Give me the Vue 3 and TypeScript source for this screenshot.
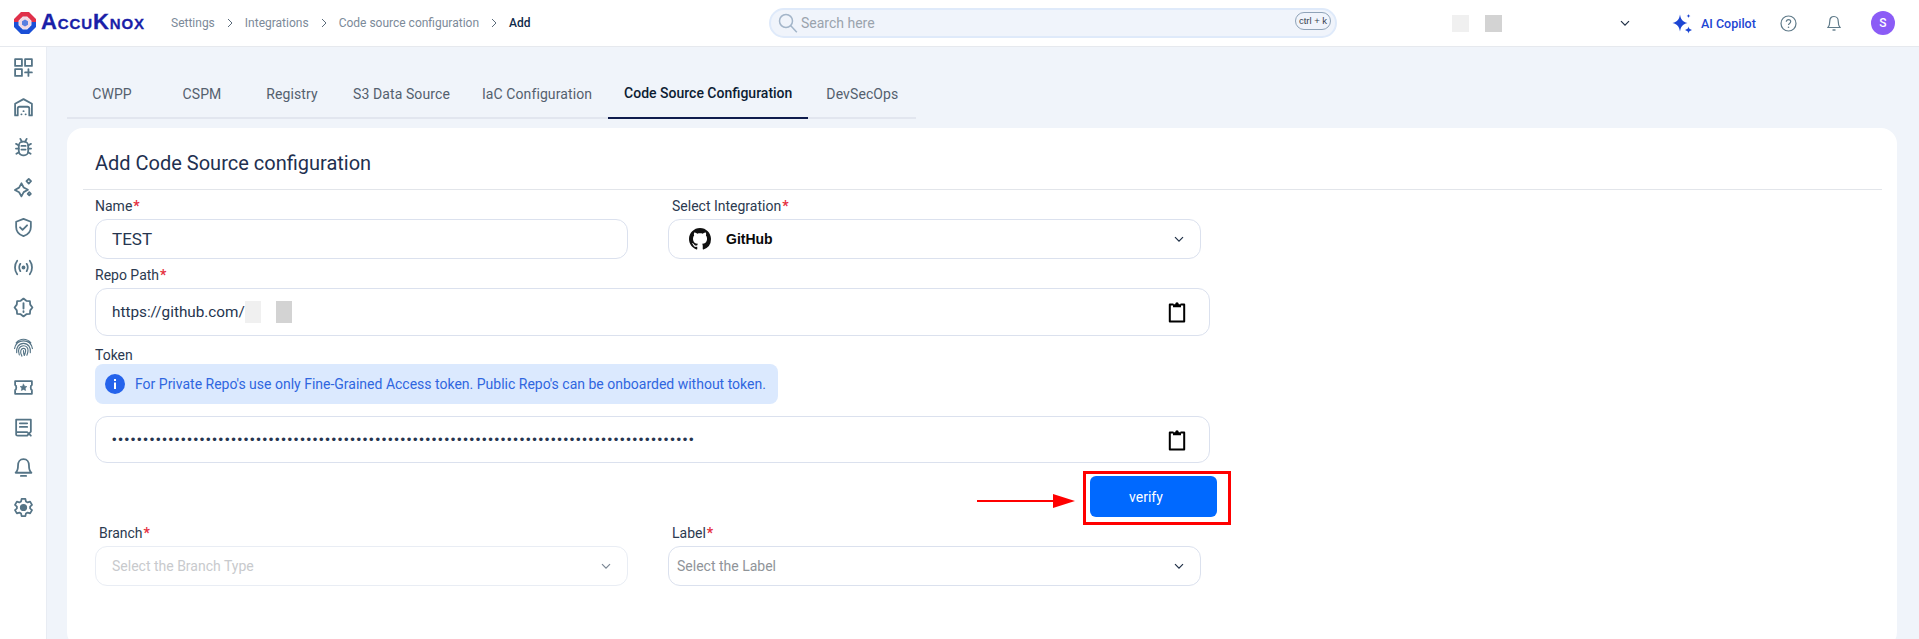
<script setup lang="ts">
const crumbs = ['Settings', 'Integrations', 'Code source configuration']
const tabs = ['CWPP', 'CSPM', 'Registry', 'S3 Data Source', 'IaC Configuration', 'Code Source Configuration', 'DevSecOps']
const activeTab = 'Code Source Configuration'
const tokenDots = '•'.repeat(93)
</script>

<template>
  <div class="shell">
    <header class="topbar">
      <div class="logo">
        <svg width="24" height="24" viewBox="0 0 24 24">
          <path d="M8 1.500h8l6.500 6.500v8L16 22.500H8L1.500 16V8z" fill="#e8edf9" />
          <path d="M8 1h8l7 7v3h-4.500V9.800L14.200 5.500H9.800L5.500 9.800V11H1V8z" fill="#e0304a" />
          <path d="M1 11h4.500v3.200l4.300 4.300h4.400l4.300-4.300V11H23v5l-7 7H8l-7-7z" fill="#1a4fd6" />
          <circle cx="12" cy="12" r="6" fill="#f4d9e4" />
          <path d="M12 8.500l3 1.700v3.500l-3 1.800-3-1.800v-3.500z" fill="#5b7fe0" />
        </svg>
        <span class="logo-text">AccuKnox</span>
      </div>
      <nav class="crumbs">
        <template v-for="c in crumbs" :key="c">
          <span class="crumb">{{ c }}</span>
          <svg class="crumb-sep" width="8" height="10" viewBox="0 0 8 10"><path d="M2 1l4 4-4 4" fill="none" stroke="#5b6b7b" stroke-width="1" /></svg>
        </template>
        <span class="crumb-current">Add</span>
      </nav>
      <div class="search">
        <svg width="22" height="22" viewBox="0 0 22 22"><circle cx="9" cy="9" r="6.500" fill="none" stroke="#a3b5c9" stroke-width="1.500" /><path d="M13.800 13.800l6 6.500" stroke="#a3b5c9" stroke-width="1.500" /></svg>
        <span class="search-hint">Search here</span>
        <span class="kbd">ctrl + k</span>
      </div>
      <div class="top-right">
        <span class="mask shade-light"></span>
        <span class="mask shade-dark"></span>
        <svg class="org-chev" width="10" height="7" viewBox="0 0 10 7"><path d="M1 1.200l4 4 4-4" fill="none" stroke="#1f2f46" stroke-width="1.200" /></svg>
        <svg class="spark" width="21" height="21" viewBox="0 0 21 21" fill="#1d46d3">
          <path d="M8 1.500c.9 5 2.300 7 7.500 8.500-5.200 1.500-6.600 3.500-7.500 8.500C7.100 13.500 5.700 11.500.5 10 5.700 8.500 7.100 6.500 8 1.500z" />
          <path d="M16.500 1c.3 1.300.7 1.700 2 2-1.300.3-1.700.7-2 2-.3-1.300-.7-1.700-2-2 1.300-.3 1.700-.7 2-2z" />
          <path d="M16.500 13.500c.4 2 1 2.600 3.500 3.500-2.500.9-3.100 1.500-3.500 3.500-.4-2-1-2.600-3.500-3.500 2.500-.9 3.100-1.500 3.500-3.500z" />
        </svg>
        <span class="copilot">AI Copilot</span>
        <svg class="help" width="17" height="17" viewBox="0 0 17 17"><circle cx="8.500" cy="8.500" r="7.500" fill="none" stroke="#5f7a89" stroke-width="1.200" /><path d="M6.300 6.700c0-1.300 1-2.100 2.200-2.100s2.200.8 2.200 2c0 1.900-2.200 1.700-2.200 3.500" fill="none" stroke="#5f7a89" stroke-width="1.200" /><circle cx="8.500" cy="12.300" r=".8" fill="#5f7a89" /></svg>
        <svg class="bell" width="14" height="17" viewBox="0 0 14 17"><path d="M7 1.500c-2.700 0-4.200 2-4.200 4.500 0 3.500-.5 5-1.800 6.500h12c-1.300-1.500-1.800-3-1.800-6.500 0-2.500-1.500-4.500-4.200-4.500z" fill="none" stroke="#5f7a89" stroke-width="1.200" /><path d="M5.500 15h3" stroke="#5f7a89" stroke-width="1.400" /></svg>
        <span class="avatar">S</span>
      </div>
    </header>

    <div class="body">
      <aside class="sidebar">
        <!-- dashboard -->
        <svg viewBox="0 0 20 20"><rect x="2" y="2" width="6.500" height="6.500" /><rect x="11.500" y="2" width="6.500" height="6.500" /><rect x="2" y="11.500" width="6.500" height="6.500" /><path d="M14.700 11.500v6.500M11.500 14.700H18" /></svg>
        <!-- warehouse -->
        <svg viewBox="0 0 20 20"><path d="M2 17.500V6.500L10 2l8 4.500v11h-2.500V11c0-1-.7-1.700-1.700-1.700H6.200c-1 0-1.700.7-1.700 1.700v6.500z" /><path d="M8 16.500h.1M12 16.500h.1M10 13.500h.1" stroke-width="1.800" /></svg>
        <!-- bug -->
        <svg viewBox="0 0 20 20"><rect x="5.500" y="4.500" width="9" height="13" rx="4" /><path d="M8 8.500h4M8 12h4M7 1.800l1.500 2.700M13 1.800l-1.500 2.700M2.800 6.500l2.700 1.500M17.200 6.500L14.500 8M2.800 11h2.700M17.200 11h-2.700M3.200 16l2.500-1.500M16.800 16l-2.500-1.500" /></svg>
        <!-- sparkles -->
        <svg viewBox="0 0 20 20"><path d="M8 6l2.200 4 4 2.200-4 2.200L8 18.500l-2.200-4-4-2.200 4-2.200z" /><path d="M15 1.800l2.200 2.200-2.200 2.200L12.800 4z" /><path d="M15.500 14.500l1.500 1.500-1.500 1.500-1.500-1.500z" /></svg>
        <!-- shield -->
        <svg viewBox="0 0 20 20"><path d="M10 1.800l7 2.700v5c0 4.300-2.800 7.300-7 8.700-4.200-1.400-7-4.400-7-8.700v-5z" /><path d="M6.700 9.800l2.400 2.400 4.300-4.300" /></svg>
        <!-- signal -->
        <svg viewBox="0 0 20 20"><path d="M4 3.500C1.200 7.200 1.200 12.800 4 16.500M16 3.500c2.800 3.700 2.800 9.300 0 13M7 6.500c-1.400 2.200-1.400 4.800 0 7M13 6.500c1.400 2.200 1.400 4.800 0 7" /><circle cx="10" cy="10" r="1" fill="#557486" /></svg>
        <!-- alert badge -->
        <svg viewBox="0 0 20 20"><path d="M10 1.500l2.700 2.100 3.400.3.300 3.400L18.500 10l-2.100 2.700-.3 3.400-3.400.3-2.700 2.100-2.700-2.100-3.400-.3-.3-3.400L1.500 10l2.100-2.700.3-3.400 3.400-.3z" /><path d="M10 5.800v5.200M10 13.500v.8" stroke-width="1.800" /></svg>
        <!-- fingerprint -->
        <svg viewBox="0 0 20 20"><path d="M3 5.500C6.800 1 13.200 1 17 5.500M1.500 11C2.500 6.200 6 3.700 10 3.700s7.500 2.500 8.500 7.300M3.500 15c-.8-5 2-9 6.500-9s7.300 4 6.500 9M6 17c-1-2.500-1-4.500-.3-6 1-2 2.500-2.700 4.300-2.700 2.700 0 4.500 2 4.300 4.700-.1 1.700-.5 3-1.100 4.300M8.500 18.200c-1.200-2-1.500-4-1-5.500.4-1.100 1.300-1.900 2.500-1.900 1.500 0 2.300 1.200 2 2.800-.2 1.500-.6 2.700-1.300 4M10 13c0 2 .2 3.200.8 4.500" stroke-width="1.100" /></svg>
        <!-- ticket -->
        <svg viewBox="0 0 20 20"><path d="M2 4h16v3.500c-1.500.6-1.500 4.400 0 5V16H2v-3.500c1.500-.6 1.500-4.400 0-5z" /><path d="M10 6.800l1 2 2.200.3-1.600 1.500.4 2.200-2-1-2 1 .4-2.200-1.600-1.500L9 8.800z" fill="#557486" stroke-width=".6" /></svg>
        <!-- report -->
        <svg viewBox="0 0 20 20"><path d="M3 17V2.500h14v11.500l-3.500 3.800H4.500C3.500 17.800 3 17.500 3 17zM3 14.500h10.500l3.500 3.300" /><path d="M6.500 6h7M6.500 9.500h7" /></svg>
        <!-- bell -->
        <svg viewBox="0 0 20 20"><path d="M10 2C6.500 2 4.800 4.800 4.800 8c0 3.800-.7 5.500-2.300 7h15c-1.600-1.500-2.300-3.200-2.300-7 0-3.200-1.700-6-5.200-6z" /><path d="M7.500 18h5" /></svg>
        <!-- settings -->
        <svg viewBox="0 0 20 20"><path d="M8.200 1.800h3.600l.5 2.400 1.700 1 2.300-.8 1.800 3.100-1.800 1.600v1.800l1.800 1.600-1.800 3.100-2.300-.8-1.700 1-.5 2.400H8.200l-.5-2.400-1.700-1-2.300.8-1.800-3.100 1.800-1.600V9.100L1.900 7.500l1.800-3.100 2.300.8 1.700-1z" /><circle cx="10" cy="10" r="2.600" fill="#557486" /></svg>
      </aside>

      <main class="main">
        <div class="tabs">
          <div v-for="t in tabs" :key="t" class="tab" :class="{ active: t === activeTab }">{{ t }}</div>
        </div>

        <section class="card">
          <h1 class="card-title">Add Code Source configuration</h1>
          <div class="form">
            <div class="row">
              <div class="field">
                <label class="lbl">Name<b>*</b></label>
                <div class="box name-box">TEST</div>
              </div>
              <div class="field">
                <label class="lbl shift">Select Integration<b>*</b></label>
                <div class="box select">
                  <svg class="gh" width="22" height="22" viewBox="0 0 16 16"><path fill="#111" d="M8 0C3.580 0 0 3.580 0 8c0 3.540 2.290 6.530 5.470 7.590.4.070.55-.17.550-.38 0-.19-.01-.82-.01-1.490-2.010.37-2.530-.49-2.690-.94-.09-.23-.48-.94-.82-1.130-.28-.15-.68-.52-.01-.53.630-.01 1.080.58 1.230.82.720 1.210 1.870.87 2.330.66.070-.52.280-.87.510-1.070-1.780-.2-3.640-.89-3.640-3.950 0-.87.310-1.590.820-2.150-.08-.2-.36-1.020.08-2.120 0 0 .67-.21 2.200.82.640-.18 1.320-.27 2-.27s1.360.09 2 .27c1.530-1.040 2.200-.82 2.200-.82.440 1.100.16 1.920.08 2.120.51.560.82 1.270.82 2.150 0 3.070-1.870 3.750-3.650 3.950.29.250.54.730.54 1.480 0 1.070-.01 1.930-.01 2.200 0 .21.150.46.550.38A8.010 8.010 0 0 0 16 8c0-4.420-3.580-8-8-8z" /></svg>
                  <span class="gh-name">GitHub</span>
                  <svg class="chev" width="10" height="7" viewBox="0 0 10 7"><path d="M1 1.200l4 4 4-4" fill="none" stroke="#1f2f46" stroke-width="1.200" /></svg>
                </div>
              </div>
            </div>

            <div class="field wide">
              <label class="lbl">Repo Path<b>*</b></label>
              <div class="box tall repo">
                <span>https://github.com/</span>
                <span class="mask-inline shade-light"></span>
                <span class="mask-inline shade-dark"></span>
                <svg class="clip" width="18" height="22" viewBox="0 0 18 22"><path d="M5.500 3.500H1.800v17h14.400v-17h-3.700" fill="none" stroke="#000" stroke-width="2" stroke-linejoin="round" /><path d="M5 6.200V3.300h2.200C7.400 2 8 1.200 9 1.200s1.600.8 1.800 2.100H13v2.900z" fill="#000" /></svg>
              </div>
            </div>

            <div class="field wide token-field">
              <label class="lbl">Token</label>
              <div class="notice">
                <svg width="20" height="20" viewBox="0 0 20 20"><circle cx="10" cy="10" r="10" fill="#2563eb" /><rect x="9" y="8.500" width="2" height="6.500" fill="#fff" /><rect x="9" y="5" width="2" height="2" fill="#fff" /></svg>
                <span>For Private Repo's use only Fine-Grained Access token. Public Repo's can be onboarded without token.</span>
              </div>
              <div class="box token">
                <span class="dots">{{ tokenDots }}</span>
                <svg class="clip" width="18" height="22" viewBox="0 0 18 22"><path d="M5.500 3.500H1.800v17h14.400v-17h-3.700" fill="none" stroke="#000" stroke-width="2" stroke-linejoin="round" /><path d="M5 6.200V3.300h2.200C7.400 2 8 1.200 9 1.200s1.600.8 1.800 2.100H13v2.900z" fill="#000" /></svg>
              </div>
            </div>

            <div class="verify-row">
              <button class="verify" type="button">verify</button>
              <!-- review markup drawn over the button -->
              <span class="mark-box"></span>
              <svg class="mark-arrow" width="98" height="14" viewBox="0 0 98 14"><path d="M0 7h78" stroke="#f00" stroke-width="2" /><path d="M76 0l22 7-22 7z" fill="#f00" /></svg>
            </div>

            <div class="row">
              <div class="field">
                <label class="lbl shift">Branch<b>*</b></label>
                <div class="box select disabled">
                  <span class="ph">Select the Branch Type</span>
                  <svg class="chev" width="10" height="7" viewBox="0 0 10 7"><path d="M1 1.200l4 4 4-4" fill="none" stroke="#7b8794" stroke-width="1.200" /></svg>
                </div>
              </div>
              <div class="field">
                <label class="lbl shift">Label<b>*</b></label>
                <div class="box select narrow-pad">
                  <span class="ph strong">Select the Label</span>
                  <svg class="chev" width="10" height="7" viewBox="0 0 10 7"><path d="M1 1.200l4 4 4-4" fill="none" stroke="#1f2f46" stroke-width="1.200" /></svg>
                </div>
              </div>
            </div>
          </div>
        </section>
      </main>
    </div>
  </div>
</template>

<style scoped>
.shell {
  width: 1919px;
  height: 639px;
  overflow: hidden;
  display: flex;
  flex-direction: column;
  font-family: Roboto, "Liberation Sans", sans-serif;
  color: #1f2f46;
  background: #f0f4fa;
}

/* top bar */
.topbar {
  height: 46px;
  flex: none;
  display: flex;
  align-items: center;
  background: #fff;
  border-bottom: 1px solid #e6e9ee;
  padding-left: 13px;
  box-sizing: content-box;
}
.logo {
  display: flex;
  align-items: center;
  gap: 4px;
  width: 158px;
  flex: none;
  margin-top: -1px;
}
.logo-text {
  font-family: "Liberation Sans", sans-serif;
  font-variant: small-caps;
  font-weight: 700;
  font-size: 22px;
  letter-spacing: 0.9px;
  -webkit-text-stroke: 0.3px #1a1fa8;
  color: #1a1fa8;
  line-height: 24px;
  transform: translateY(-1px);
}
.crumbs {
  display: flex;
  align-items: center;
  width: 598px;
  flex: none;
  font-size: 12px;
}
.crumb {
  color: #7c8a99;
}
.crumb-sep {
  margin: 0 11px;
}
.crumb-current {
  color: #0f2a4a;
  font-weight: 500;
}
.search {
  width: 568px;
  height: 30px;
  flex: none;
  box-sizing: border-box;
  display: flex;
  align-items: center;
  gap: 2px;
  padding: 0 4px 0 6px;
  background: #f0f4fb;
  border: 2px solid #dfeafa;
  border-radius: 15px;
}
.search-hint {
  font-size: 14px;
  color: #9aa3ad;
}
.kbd {
  margin-left: auto;
  width: 36px;
  height: 18px;
  box-sizing: border-box;
  border: 1px solid #8fa3b8;
  border-radius: 9px;
  font-size: 9.500px;
  line-height: 16px;
  text-align: center;
  color: #36424f;
  font-family: "Liberation Sans", sans-serif;
  margin-top: -5px;
}
.top-right {
  display: flex;
  align-items: center;
  margin-left: 115px;
}
.mask {
  width: 17px;
  height: 17px;
}
.shade-light {
  background: #f0f0f0;
}
.shade-dark {
  background: #d3d3d3;
}
.mask.shade-dark {
  margin-left: 16px;
}
.org-chev {
  margin-left: 118px;
}
.spark {
  margin-left: 42px;
}
.copilot {
  margin-left: 8px;
  font-size: 12.500px;
  font-weight: 500;
  color: #1d46d3;
}
.help {
  margin-left: 24px;
}
.bell {
  margin-left: 30px;
}
.avatar {
  margin-left: 30px;
  width: 24px;
  height: 24px;
  border-radius: 50%;
  background: #8b5cf6;
  color: #fff;
  font-size: 12px;
  font-weight: 500;
  text-align: center;
  line-height: 24px;
}

/* side nav */
.body {
  flex: 1;
  display: flex;
  min-height: 0;
}
.sidebar {
  width: 46px;
  flex: none;
  background: #fff;
  border-right: 1px solid #e8ecf3;
  box-sizing: content-box;
  display: flex;
  flex-direction: column;
  align-items: center;
  gap: 19px;
  padding-top: 10px;
}
.sidebar svg {
  width: 21px;
  height: 21px;
  flex: none;
  fill: none;
  stroke: #557486;
  stroke-width: 1.700;
  stroke-linejoin: round;
  stroke-linecap: round;
}

/* content */
.main {
  flex: 1;
  min-width: 0;
  padding: 24px 22px 0 20px;
}
.tabs {
  display: inline-flex;
  height: 46px;
  border-bottom: 2px solid #e2e6ef;
  box-sizing: content-box;
}
.tab {
  min-width: 90px;
  box-sizing: border-box;
  padding: 0 16px 2px;
  display: flex;
  align-items: center;
  justify-content: center;
  font-size: 14px;
  letter-spacing: 0.1px;
  color: #54606e;
  white-space: nowrap;
  margin-bottom: -2px;
}
.tab:last-child {
  min-width: 108px;
}
.tab.active {
  color: #0c1c33;
  font-weight: 500;
  letter-spacing: 0;
  border-bottom: 2px solid #0f1c4d;
}
.card {
  margin-top: 9px;
  height: 520px;
  background: #fff;
  border-radius: 16px;
}
.card-title {
  margin: 0 15px 0 16px;
  height: 62px;
  box-sizing: border-box;
  padding: 22px 0 0 12px;
  font-size: 20px;
  font-weight: 400;
  line-height: 26px;
  color: #1f3050;
  border-bottom: 1px solid #e2e5ea;
}
.form {
  padding: 9px 0 0 28px;
  width: 1115px;
  display: flex;
  flex-direction: column;
}
.row {
  display: grid;
  grid-template-columns: 533px 533px;
  column-gap: 40px;
}
.field {
  display: flex;
  flex-direction: column;
}
.lbl {
  height: 20px;
  font-size: 14px;
  line-height: 15px;
  color: #2c3a50;
}
.lbl b {
  color: #e5303f;
  font-weight: 700;
  margin-left: 1px;
}
.lbl.shift {
  padding-left: 4px;
}
.box {
  height: 40px;
  box-sizing: border-box;
  display: flex;
  align-items: center;
  padding: 0 16px;
  border: 1px solid #dbe1ee;
  border-radius: 12px;
  font-size: 16px;
  color: #26354f;
}
.name-box {
  font-size: 17px;
}
.field.wide {
  margin-top: 9px;
}
.field.token-field {
  margin-top: 12px;
}
.box.tall {
  height: 48px;
}
.repo {
  font-size: 15.300px;
}
.mask-inline {
  width: 16px;
  height: 22px;
}
.mask-inline.shade-dark {
  margin-left: 15px;
}
.clip {
  margin-left: auto;
  margin-right: 7px;
}
.select {
  position: relative;
}
.gh {
  margin-left: 4px;
}
.gh-name {
  margin-left: 15px;
  font-family: "Liberation Sans", sans-serif;
  font-size: 14px;
  font-weight: 700;
  color: #0a0a0a;
}
.chev {
  margin-left: auto;
}
.disabled {
  border-color: #e9edf4;
}
.narrow-pad {
  padding-left: 8px;
}
.ph {
  font-size: 14px;
  color: #c8cacd;
}
.ph.strong {
  color: #8f9499;
}
.notice {
  width: 683px;
  height: 40px;
  box-sizing: border-box;
  display: flex;
  align-items: center;
  gap: 10px;
  padding-left: 10px;
  background: #dbe9fe;
  border-radius: 8px;
  font-size: 14px;
  color: #2f66e0;
  white-space: nowrap;
  margin-top: -4px;
}
.box.token {
  height: 47px;
  margin-top: 12px;
}
.dots {
  font-family: "Liberation Sans", sans-serif;
  font-size: 13px;
  letter-spacing: 1.720px;
  white-space: nowrap;
  color: #26354f;
}
.verify-row {
  position: relative;
  height: 63px;
  box-sizing: border-box;
  display: flex;
  justify-content: flex-end;
  padding-top: 13px;
}
.verify {
  width: 127px;
  height: 41px;
  margin-right: -7px;
  border: 0;
  border-radius: 6px;
  background: #0069ff;
  color: #fff;
  font: 14px Roboto, "Liberation Sans", sans-serif;
  padding: 0 15px 0 0;
}
.mark-box {
  position: absolute;
  left: 988px;
  top: 8px;
  width: 148px;
  height: 54px;
  box-sizing: border-box;
  border: 3px solid #f00;
}
.mark-arrow {
  position: absolute;
  left: 882px;
  top: 31px;
}
</style>

<style>
html,
body {
  margin: 0;
  background: #f0f4fa;
}
</style>
